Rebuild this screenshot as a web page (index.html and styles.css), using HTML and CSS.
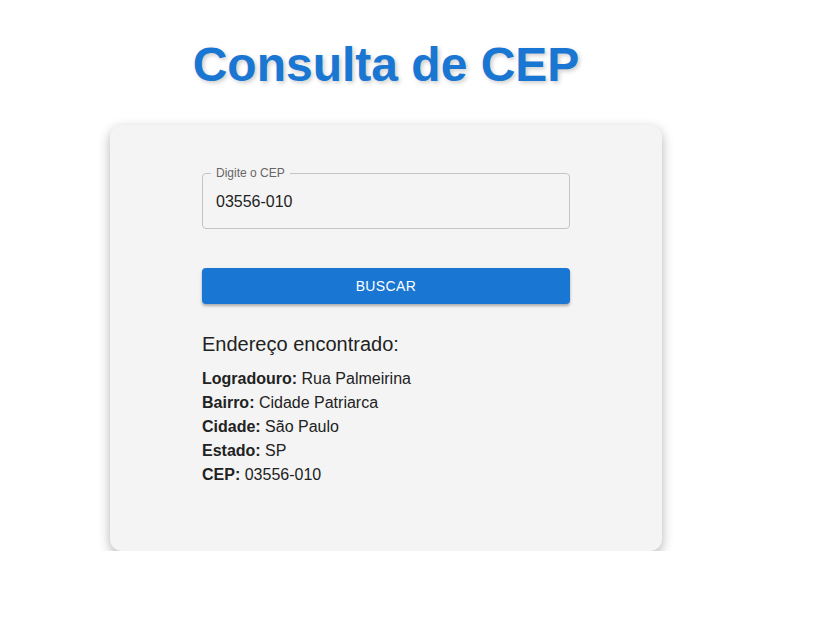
FILE: index.html
```html
<!DOCTYPE html>
<html lang="pt-BR">
<head>
    <meta charset="UTF-8">
    <meta name="viewport" content="width=device-width, initial-scale=1.0">
    <title>Consulta de CEP</title>
    <link rel="stylesheet" href="styles.css">
</head>
<body>
    <div class="wrapper">
        <h1 class="title">Consulta de CEP</h1>

        <div class="card">
            <div class="field">
                <label for="cep" class="field-label">Digite o CEP</label>
                <input type="text" id="cep" class="field-input" value="03556-010">
            </div>

            <button class="button">Buscar</button>

            <div class="result">
                <h3 class="result-title">Endereço encontrado:</h3>
                <p><strong>Logradouro:</strong> Rua Palmeirina</p>
                <p><strong>Bairro:</strong> Cidade Patriarca</p>
                <p><strong>Cidade:</strong> São Paulo</p>
                <p><strong>Estado:</strong> SP</p>
                <p><strong>CEP:</strong> 03556-010</p>
            </div>
        </div>
    </div>
</body>
</html>
```

FILE: styles.css
```css
body {
    margin: 0;
    padding: 0;
    font-family: "Liberation Sans", Arial, sans-serif;
    background: #fff;
    color: #222;
}

.wrapper {
    width: 552px;
    margin-left: 110px;
}

.title {
    margin: 37px 0 33px;
    font-size: 48px;
    line-height: 55px;
    font-weight: bold;
    text-align: center;
    color: #1976d2;
    text-shadow: 2px 2px 4px rgba(0, 0, 0, 0.2);
}

.card {
    padding: 48px 92px 64px;
    background: #f4f4f4;
    border-radius: 12px;
    box-shadow: 0 4px 12px rgba(0, 0, 0, 0.3);
}

.field {
    position: relative;
}

.field-label {
    position: absolute;
    top: -7px;
    left: 9px;
    padding: 0 5px;
    font-size: 12px;
    line-height: 14px;
    color: #666;
    background: #f4f4f4;
}

.field-input {
    display: block;
    box-sizing: border-box;
    width: 100%;
    height: 56px;
    padding: 2px 13px 0;
    font-family: inherit;
    font-size: 16px;
    color: #222;
    background: transparent;
    border: 1px solid #c4c4c4;
    border-radius: 4px;
    outline: none;
}

.button {
    display: block;
    width: 100%;
    height: 36px;
    margin-top: 39px;
    font-family: inherit;
    font-size: 14px;
    letter-spacing: 0.4px;
    text-transform: uppercase;
    color: #fff;
    background: #1976d2;
    border: none;
    border-radius: 4px;
    box-shadow: 0 2px 3px rgba(0, 0, 0, 0.3);
    cursor: pointer;
}

.result {
    margin-top: 28px;
}

.result-title {
    margin: 0 0 11px;
    font-size: 20px;
    line-height: 24px;
    font-weight: normal;
}

.result p {
    margin: 0;
    font-size: 16px;
    line-height: 24px;
}
```
